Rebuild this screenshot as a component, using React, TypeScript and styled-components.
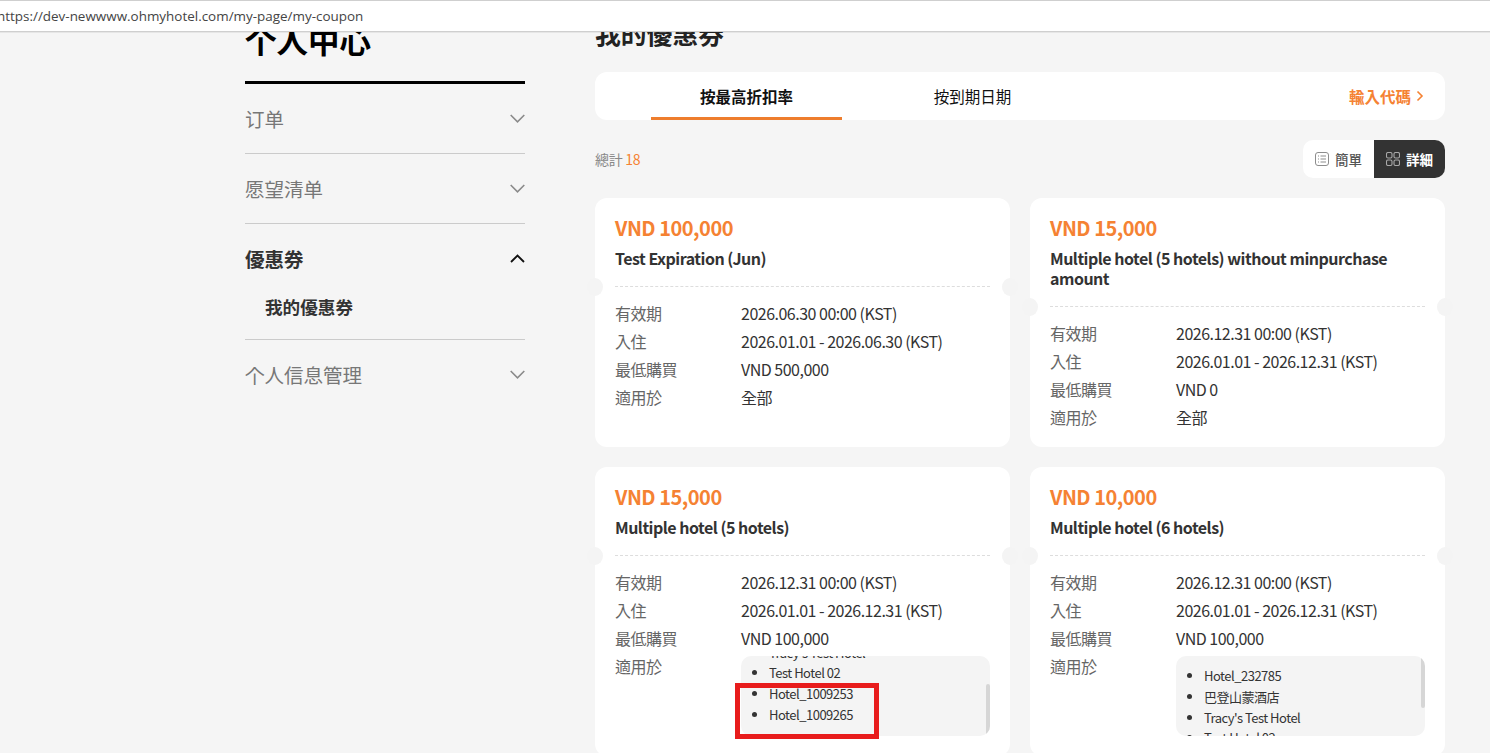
import React from "react";
import styled, { createGlobalStyle } from "styled-components";

const Global = createGlobalStyle`
  html, body { margin: 0; padding: 0; background: #f5f5f5; }
  body { font-family: "Noto Sans CJK KR", "Noto Sans", sans-serif; color: #333; }
  * { box-sizing: border-box; }
`;

const Screen = styled.div`
  position: relative;
  width: 1490px;
  height: 753px;
  overflow: hidden;
  background: #f5f5f5;
`;

const UrlBar = styled.div`
  height: 32px;
  background: #fff;
  border-top: 1px solid #cfcfcf;
  border-bottom: 1px solid #cfcfcf;
  display: flex;
  align-items: center;
  font-family: "Open Sans", sans-serif;
  font-size: 13.45px;
  color: #444;
  box-shadow: 0 1px 0 #e6e6e6;
`;

const UrlText = styled.span`
  margin-left: -3px;
  margin-top: -1px;
  white-space: nowrap;
`;

const Viewport = styled.div`
  height: 721px;
  overflow: hidden;
  display: flex;
  padding-left: 245px;
  gap: 70px;
`;

const Sidebar = styled.aside`
  width: 280px;
  flex: none;
`;

const SideTitleBox = styled.div`
  height: 52px;
  border-bottom: 3px solid #000;
  display: flex;
  align-items: flex-end;
  padding-bottom: 25px;
`;

const SideTitle = styled.h1`
  margin: 0;
  font-size: 31.5px;
  line-height: 34px;
  font-weight: 700;
  color: #000;
`;

const SideSection = styled.div<{ $last?: boolean }>`
  border-bottom: ${(p) => (p.$last ? "none" : "1px solid #cbcbcb")};
`;

const SideHead = styled.div<{ $active?: boolean }>`
  height: 69px;
  display: flex;
  align-items: center;
  justify-content: space-between;
  font-size: 19.5px;
  font-weight: ${(p) => (p.$active ? 700 : 400)};
  color: ${(p) => (p.$active ? "#333" : "#777")};
`;

const SideSub = styled.div`
  margin-top: 1px;
  height: 45px;
  padding-left: 20px;
  font-size: 17.6px;
  line-height: 26px;
  font-weight: 700;
  color: #333;
`;

const Main = styled.main`
  width: 850px;
  flex: none;
`;

const MainTitleBox = styled.div`
  height: 40px;
  display: flex;
  align-items: flex-end;
  padding-bottom: 24px;
`;

const MainTitle = styled.h2`
  margin: 0;
  font-size: 25.8px;
  line-height: 30px;
  font-weight: 700;
  color: #222;
`;

const TabBar = styled.div`
  height: 48px;
  background: #fff;
  border-radius: 12px;
  display: flex;
  align-items: stretch;
  padding: 0 21px 0 56px;
  gap: 35px;
`;

const Tab = styled.div<{ $active?: boolean }>`
  width: 191px;
  display: flex;
  align-items: center;
  justify-content: center;
  font-size: 15.5px;
  font-weight: ${(p) => (p.$active ? 700 : 400)};
  color: #111;
  border-bottom: 3px solid ${(p) => (p.$active ? "#ee7d2d" : "transparent")};
  padding-top: 3px;
`;

const CodeLink = styled.div`
  margin-left: auto;
  display: flex;
  align-items: center;
  gap: 5px;
  font-size: 15.5px;
  font-weight: 700;
  color: #f58233;
`;

const SummaryRow = styled.div`
  height: 38px;
  margin-top: 20px;
  display: flex;
  align-items: center;
  justify-content: space-between;
`;

const Total = styled.div`
  font-size: 14px;
  color: #888;
  letter-spacing: -0.3px;
`;

const TotalNum = styled.span`
  color: #f58233;
`;

const ViewToggle = styled.div`
  display: flex;
  height: 38px;
  border-radius: 10px;
  overflow: hidden;
`;

const ViewBtn = styled.div<{ $active?: boolean }>`
  width: 71px;
  display: flex;
  align-items: center;
  justify-content: center;
  gap: 6px;
  font-size: 13.5px;
  font-weight: ${(p) => (p.$active ? 700 : 500)};
  background: ${(p) => (p.$active ? "#333" : "#fff")};
  color: ${(p) => (p.$active ? "#fff" : "#555")};
`;

const Grid = styled.div`
  margin-top: 20px;
  display: grid;
  grid-template-columns: 415px 415px;
  gap: 20px;
`;

const Card = styled.article`
  position: relative;
  background: #fff;
  border-radius: 12px;
  padding: 16px 20px 0;
`;

const Amount = styled.div`
  font-size: 20px;
  line-height: 28px;
  font-weight: 700;
  letter-spacing: -0.5px;
  color: #f58233;
`;

const CardTitle = styled.div`
  margin-top: 6px;
  font-size: 16px;
  line-height: 20px;
  font-weight: 700;
  letter-spacing: -0.5px;
  color: #333;
`;

const Ticket = styled.div`
  position: relative;
  margin-top: 18px;
  border-top: 1px dashed #ddd;
  padding-top: 12px;
  padding-bottom: 16px;
`;

const Notch = styled.span<{ $side: "left" | "right" }>`
  position: absolute;
  top: -9px;
  ${(p) => p.$side}: -28px;
  width: 16px;
  height: 18px;
  border-radius: 50%;
  background: #f4f4f4;
`;

const Info = styled.div`
  display: grid;
  grid-template-columns: 126px 1fr;
  grid-auto-rows: minmax(28px, auto);
  font-size: 16px;
  line-height: 28px;
  letter-spacing: -0.5px;
`;

const Label = styled.div`
  color: #666;
`;

const Value = styled.div`
  color: #333;
`;

const ListBox = styled.div`
  position: relative;
  grid-column: 2;
  height: 80px;
  margin: 4px 0 4px;
  background: #f4f4f4;
  border-radius: 10px;
  overflow: hidden;
`;

const HotelList = styled.ul<{ $offset: number }>`
  margin: ${(p) => 10 - p.$offset}px 0 0;
  padding: 0 0 0 28px;
  font-size: 13px;
  line-height: 20.8px;
  letter-spacing: -0.5px;
  color: #333;
`;

const Thumb = styled.span<{ $top: number }>`
  position: absolute;
  right: 0;
  top: ${(p) => p.$top}px;
  width: 4px;
  height: 52px;
  background: #d6d6d6;
  border-radius: 2px;
`;

const Highlight = styled.div`
  position: absolute;
  left: 735px;
  top: 683px;
  width: 144px;
  height: 56px;
  border: 5px solid #e81c1c;
  pointer-events: none;
`;

const Chevron = ({ up, color = "#8a8a8a" }: { up?: boolean; color?: string }) => (
  <svg width="15" height="9" viewBox="0 0 15 9" fill="none">
    <path
      d={up ? "M1 8 L7.5 1.5 L14 8" : "M0.7 1 L7.5 7.8 L14.3 1"}
      stroke={color}
      strokeWidth={up ? 1.8 : 1.6}
    />
  </svg>
);

const ListIcon = () => (
  <svg width="14" height="14" viewBox="0 0 14 14" fill="none" stroke="#8d8d8d">
    <rect x="0.5" y="0.5" width="13" height="13" rx="2.5" />
    <path d="M3 4h1M5.5 4H11M3 7h1M5.5 7H11M3 10h1M5.5 10H11" />
  </svg>
);

const GridIcon = () => (
  <svg width="14" height="14" viewBox="0 0 14 14" fill="none" stroke="#a8a8a8" strokeWidth="1.1">
    <rect x="0.5" y="0.5" width="5.5" height="5.5" rx="1.5" />
    <rect x="8" y="0.5" width="5.5" height="5.5" rx="1.5" />
    <rect x="0.5" y="8" width="5.5" height="5.5" rx="1.5" />
    <rect x="8" y="8" width="5.5" height="5.5" rx="1.5" />
  </svg>
);

const hotels = ["Hotel_232785", "巴登山蒙酒店", "Tracy's Test Hotel", "Test Hotel 02", "Hotel_1009253", "Hotel_1009265"];

type Coupon = {
  amount: string;
  title: string;
  expiry: string;
  stay: string;
  min: string;
  list?: { offset: number; thumb: number };
};

const coupons: Coupon[] = [
  { amount: "VND 100,000", title: "Test Expiration (Jun)", expiry: "2026.06.30 00:00 (KST)", stay: "2026.01.01 - 2026.06.30 (KST)", min: "VND 500,000" },
  { amount: "VND 15,000", title: "Multiple hotel (5 hotels) without minpurchase amount", expiry: "2026.12.31 00:00 (KST)", stay: "2026.01.01 - 2026.12.31 (KST)", min: "VND 0" },
  { amount: "VND 15,000", title: "Multiple hotel (5 hotels)", expiry: "2026.12.31 00:00 (KST)", stay: "2026.01.01 - 2026.12.31 (KST)", min: "VND 100,000", list: { offset: 65, thumb: 28 } },
  { amount: "VND 10,000", title: "Multiple hotel (6 hotels)", expiry: "2026.12.31 00:00 (KST)", stay: "2026.01.01 - 2026.12.31 (KST)", min: "VND 100,000", list: { offset: 0, thumb: 0 } },
];

export default function App() {
  return (
    <Screen>
      <Global />
      <UrlBar>
        <UrlText>https://dev-newwww.ohmyhotel.com/my-page/my-coupon</UrlText>
      </UrlBar>
      <Viewport>
        <Sidebar>
          <SideTitleBox>
            <SideTitle>个人中心</SideTitle>
          </SideTitleBox>
          <SideSection>
            <SideHead>订单<Chevron /></SideHead>
          </SideSection>
          <SideSection>
            <SideHead>愿望清单<Chevron /></SideHead>
          </SideSection>
          <SideSection>
            <SideHead $active>優惠券<Chevron up color="#111" /></SideHead>
            <SideSub>我的優惠券</SideSub>
          </SideSection>
          <SideSection $last>
            <SideHead>个人信息管理<Chevron /></SideHead>
          </SideSection>
        </Sidebar>
        <Main>
          <MainTitleBox>
            <MainTitle>我的優惠券</MainTitle>
          </MainTitleBox>
          <TabBar>
            <Tab $active>按最高折扣率</Tab>
            <Tab>按到期日期</Tab>
            <CodeLink>
              輸入代碼
              <svg width="8" height="12" viewBox="0 0 8 12" fill="none">
                <path d="M1.5 1.5 L6 6 L1.5 10.5" stroke="#f58233" strokeWidth="1.6" />
              </svg>
            </CodeLink>
          </TabBar>
          <SummaryRow>
            <Total>總計 <TotalNum>18</TotalNum></Total>
            <ViewToggle>
              <ViewBtn><ListIcon />簡單</ViewBtn>
              <ViewBtn $active><GridIcon />詳細</ViewBtn>
            </ViewToggle>
          </SummaryRow>
          <Grid>
            {coupons.map((c, i) => (
              <Card key={i}>
                <Amount>{c.amount}</Amount>
                <CardTitle>{c.title}</CardTitle>
                <Ticket>
                  <Notch $side="left" />
                  <Notch $side="right" />
                  <Info>
                    <Label>有效期</Label><Value>{c.expiry}</Value>
                    <Label>入住</Label><Value>{c.stay}</Value>
                    <Label>最低購買</Label><Value>{c.min}</Value>
                    <Label>適用於</Label>
                    {c.list ? (
                      <ListBox>
                        <HotelList $offset={c.list.offset}>
                          {hotels.map((h) => <li key={h}>{h}</li>)}
                        </HotelList>
                        <Thumb $top={c.list.thumb} />
                      </ListBox>
                    ) : (
                      <Value>全部</Value>
                    )}
                  </Info>
                </Ticket>
              </Card>
            ))}
          </Grid>
        </Main>
      </Viewport>
      <Highlight />
    </Screen>
  );
}
